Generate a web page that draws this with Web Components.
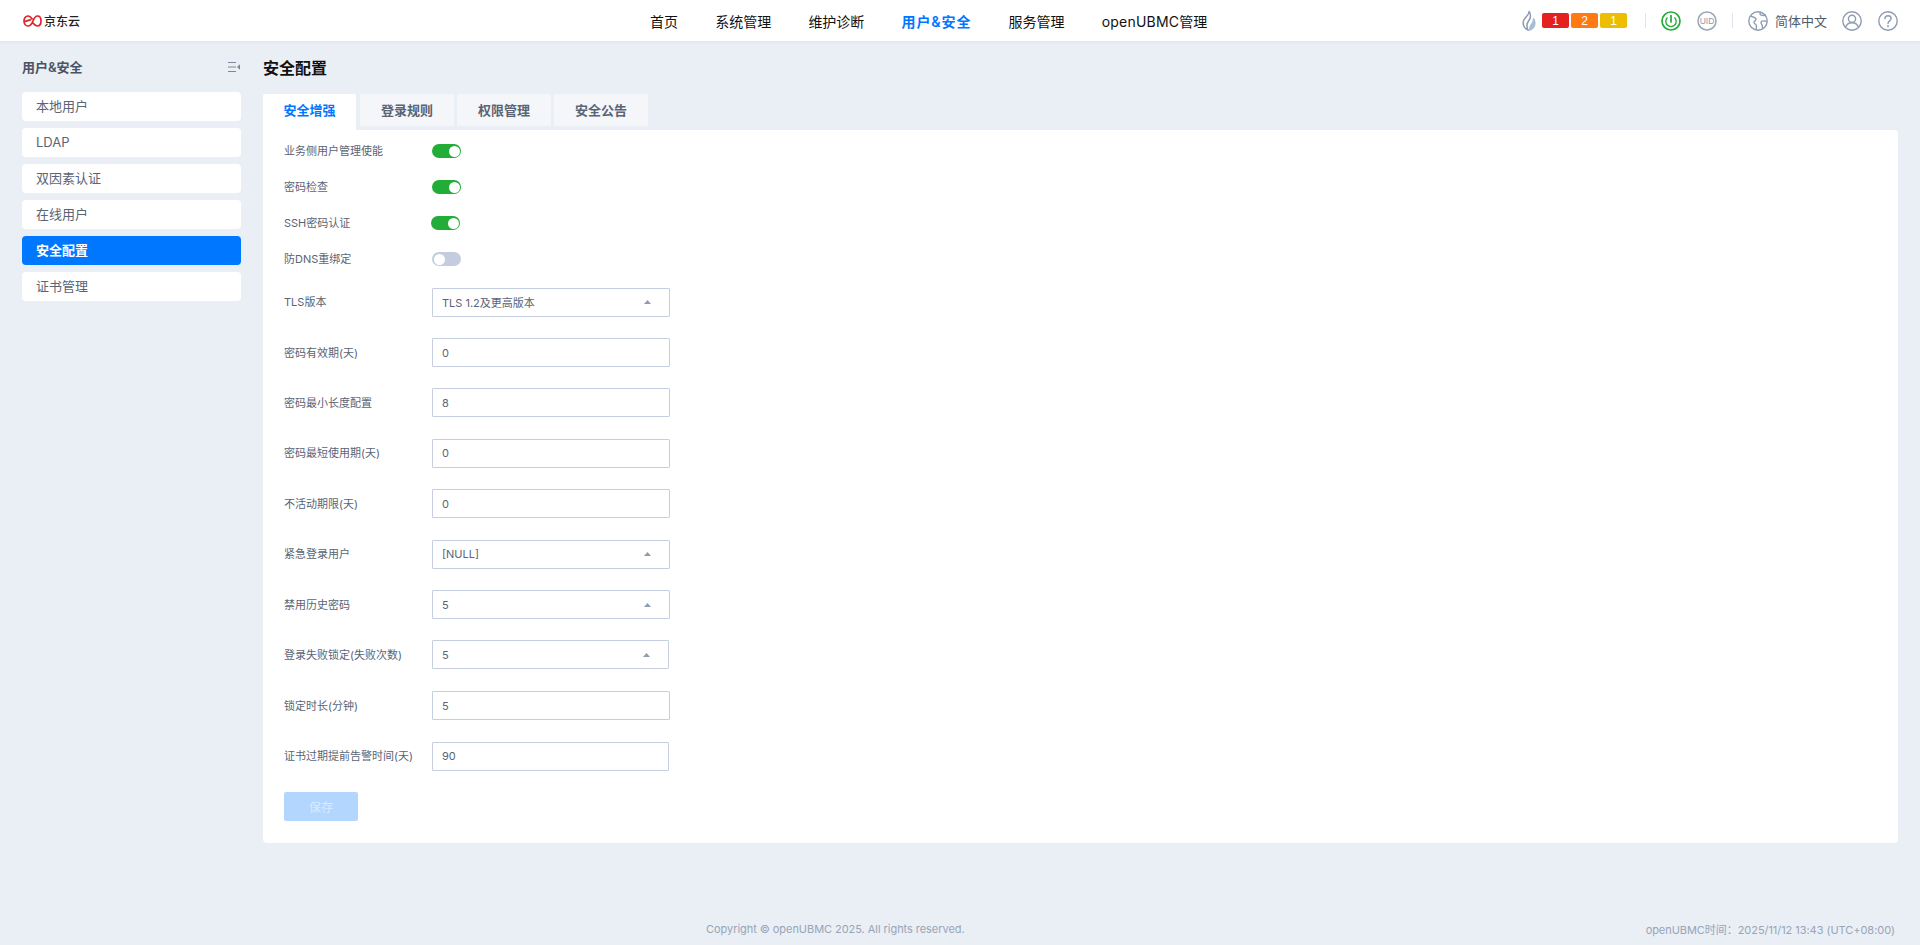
<!DOCTYPE html>
<html lang="zh">
<head>
<meta charset="utf-8">
<title>openUBMC</title>
<style>
  html, body { margin: 0; height: 100%; }
  body {
    background: #eaeff6;
    font-family: Inter, "Noto Sans CJK SC", sans-serif;
    overflow: hidden;
  }
</style>
</head>
<body>
<ubmc-app>
  <ubmc-header slot="header"></ubmc-header>
  <ubmc-sidebar slot="side" title-text="用户&amp;安全">
    <side-item>本地用户</side-item>
    <side-item>LDAP</side-item>
    <side-item>双因素认证</side-item>
    <side-item>在线用户</side-item>
    <side-item active>安全配置</side-item>
    <side-item>证书管理</side-item>
  </ubmc-sidebar>
  <security-page slot="main"></security-page>
  <ubmc-footer slot="footer"></ubmc-footer>
</ubmc-app>

<script>
// App shell
class UbmcApp extends HTMLElement {
  constructor() {
    super();
    const shadow = this.attachShadow({ mode: 'open' });
    shadow.innerHTML = `
      <style>
        :host { display: flex; flex-direction: column; height: 945px; }
        .body { display: flex; flex: 1; min-height: 0; padding: 0 22px 0 22px; }
        ::slotted([slot=side]) { width: 219px; flex: none; }
        ::slotted([slot=main]) { flex: 1; min-width: 0; margin-left: 22px; }
      </style>
      <slot name="header"></slot>
      <div class="body">
        <slot name="side"></slot>
        <slot name="main"></slot>
      </div>
      <slot name="footer"></slot>
    `;
  }
}

// Top bar
class UbmcHeader extends HTMLElement {
  constructor() {
    super();
    const shadow = this.attachShadow({ mode: 'open' });
    const nav = ['首页', '系统管理', '维护诊断', '用户&安全', '服务管理', 'openUBMC管理'];
    shadow.innerHTML = `
      <style>
        :host {
          display: flex; align-items: center; height: 41px; background: #fff;
          box-shadow: 0 1px 3px rgba(120, 140, 170, .12);
          position: relative; padding: 0 22px 0 23px; color: #4f5a6b;
        }
        .logo { display: flex; align-items: center; width: 627px; flex: none; }
        .logo b { font: 500 12px "Noto Sans CJK SC", sans-serif; color: #222; margin-left: 2px; }
        nav { display: flex; gap: 37.2px; font-size: 14px; color: #111; }
        nav a:last-child { letter-spacing: .2px; }
        nav a.on { color: #0077ff; font-weight: 600; letter-spacing: .9px; }
        .tools { margin-left: auto; display: flex; align-items: center; }
        .badge {
          width: 27px; height: 15px; border-radius: 2px; color: #fff; font: 12px "Liberation Sans", sans-serif;
          display: flex; align-items: center; justify-content: center; margin-left: 2px;
        }
        .sep { width: 1px; height: 15px; background: #dfe5ee; }
        .lang { font-size: 13px; margin-left: 7px; }
        svg { display: block; flex: none; }
      </style>
      <div class="logo">
        <svg width="19" height="12" viewBox="0 0 19 12" fill="none" stroke="#e0232b" stroke-width="1.700">
          <path d="M9.500 4.500C8.300 2.500 6.800 1 5 1 2.600 1 1 3.200 1 6c0 2.800 1.600 5 4 5 2.800 0 4-2.500 5-5 1-2.500 2-5 4.500-5C16.700 1 18 3.200 18 6c0 2.800-1.400 5-3.800 5-1.800 0-3.200-1.500-4.400-3.200"/>
          <path d="M1.500 6.600L8 4.600"/>
        </svg>
        <b>京东云</b>
      </div>
      <nav>${nav.map((n) => `<a class="${n === '用户&安全' ? 'on' : ''}">${n.replace('&', '&amp;')}</a>`).join('')}</nav>
      <div class="tools">
        <svg width="14" height="21" viewBox="0 0 14 21" fill="none" stroke="#8d9cb2" stroke-width="1.500" style="margin-right:4px">
          <path d="M7 1C8 5 2.500 7 1.300 11.500.8 15 2.800 18.500 6 20 4.300 16.500 4.500 13.500 6.800 10.500 8.800 8 9 4.500 7 1Z"/>
          <path d="M11.500 8.500C13 11 13.200 14 12 16.500 11 18.200 9.800 19.300 8 20 7.300 17 8.500 15.500 9.800 14 11 12.600 11.700 10.800 11.500 8.500Z" fill="#a9bdd6" stroke="#a9bdd6"/>
        </svg>
        <span class="badge" style="background:#e42020">1</span>
        <span class="badge" style="background:#ff7a10">2</span>
        <span class="badge" style="background:#edbe00">1</span>
        <span class="sep" style="margin-left:18px"></span>
        <svg width="20" height="20" viewBox="0 0 20 20" fill="none" stroke="#22ac38" stroke-width="1.700" style="margin-left:15px">
          <circle cx="10" cy="10" r="9"/>
          <path d="M10 4.500v6.500" stroke-linecap="round"/>
          <path d="M6.500 6.500a5.200 5.200 0 1 0 7 0" stroke-width="1.300"/>
        </svg>
        <svg width="20" height="20" viewBox="0 0 20 20" fill="none" style="margin-left:16px">
          <circle cx="10" cy="10" r="9" stroke="#97a5ba" stroke-width="1.500"/>
          <text x="10" y="13" text-anchor="middle" font-size="8.500" fill="#8a98ae" font-family="Liberation Sans">UID</text>
        </svg>
        <span class="sep" style="margin-left:15px"></span>
        <svg width="20" height="20" viewBox="0 0 20 20" fill="none" stroke="#8d9cb2" stroke-width="1.400" style="margin-left:15px">
          <circle cx="10" cy="10" r="9.200"/>
          <path d="M2.500 5.200C5 6 7.500 6.200 8 8c.4 1.700-2.200 2-2 3.500.2 1.400 2 1.500 2.400 3 .2 1 0 3-.4 4.500"/>
          <path d="M12.500 1.200c-.8 1.300-.6 2.500.8 3 1.500.5 3.200.2 4.800-.2M18.800 10.500c-1.800-.7-3.300-.9-4.800-.3-1.300.6-1.200 2.100-.4 3 .8.900 1 2.200.9 4"/>
        </svg>
        <span class="lang">简体中文</span>
        <svg width="20" height="20" viewBox="0 0 20 20" fill="none" stroke="#8d9cb2" stroke-width="1.400" style="margin-left:15px">
          <circle cx="10" cy="10" r="9.200"/>
          <circle cx="10" cy="7.800" r="3.600"/>
          <path d="M3.500 16.500c1-3.200 3.500-4.700 6.500-4.700s5.500 1.500 6.500 4.700"/>
        </svg>
        <svg width="20" height="20" viewBox="0 0 20 20" fill="none" stroke="#8d9cb2" stroke-width="1.400" style="margin-left:16px">
          <circle cx="10" cy="10" r="9.200"/>
          <path d="M6.900 7.600C7 5.800 8.300 4.700 10 4.700c1.800 0 3.100 1.100 3.100 2.700 0 2.400-3.100 2.500-3.100 5" stroke-linecap="round"/>
          <path d="M10 14.500v1.200" stroke-linecap="round"/>
        </svg>
      </div>
    `;
  }
}

// Left menu
class UbmcSidebar extends HTMLElement {
  constructor() {
    super();
    const shadow = this.attachShadow({ mode: 'open' });
    shadow.innerHTML = `
      <style>
        :host { display: block; }
        .head {
          display: flex; align-items: center; justify-content: space-between;
          height: 51px; padding-right: 1px;
          font-size: 13px; font-weight: 600; color: #4a5364;
        }
        .list { display: flex; flex-direction: column; gap: 7px; }
      </style>
      <div class="head">
        <span>${this.getAttribute('title-text').replace('&', '&amp;')}</span>
        <svg width="12" height="10" viewBox="0 0 12 10" fill="#7c8798">
          <rect x="0" y="0" width="8" height="1"/><rect x="0" y="4.500" width="8" height="1"/><rect x="0" y="9" width="8" height="1"/>
          <path d="M12 2.200v5.600L9 5z"/>
        </svg>
      </div>
      <div class="list"><slot></slot></div>
    `;
  }
}

class SideItem extends HTMLElement {
  constructor() {
    super();
    const shadow = this.attachShadow({ mode: 'open' });
    shadow.innerHTML = `
      <style>
        :host {
          display: flex; align-items: center; height: 29px; padding: 0 0 2px 14px; box-sizing: border-box;
          background: #fff; border-radius: 4px; font-size: 13px; color: #5a6474;
        }
        :host([active]) { background: #0077ff; color: #fff; font-weight: 600; }
      </style>
      <slot></slot>
    `;
  }
}

// Form bits
class ToggleSwitch extends HTMLElement {
  constructor() {
    super();
    const shadow = this.attachShadow({ mode: 'open' });
    shadow.innerHTML = `
      <style>
        :host {
          display: flex; align-items: center; width: 29px; height: 14px; box-sizing: border-box;
          padding: 0 1.5px; border-radius: 7px; background: #c3cddd;
        }
        :host([on]) { background: #22ac38; justify-content: flex-end; }
        i { width: 11px; height: 11px; border-radius: 50%; background: #fff; }
      </style>
      <i></i>
    `;
  }
}

class FormRow extends HTMLElement {
  constructor() {
    super();
    const shadow = this.attachShadow({ mode: 'open' });
    shadow.innerHTML = `
      <style>
        :host { display: flex; align-items: center; height: 50.4px; font-size: 11px; color: #5a6474; }
        :host([compact]) { height: 36px; }
        .label { width: 148px; flex: none; position: relative; top: -1px; }
      </style>
      <span class="label">${this.getAttribute('label')}</span>
      <slot></slot>
    `;
  }
}

class ValueBox extends HTMLElement {
  constructor() {
    super();
    const shadow = this.attachShadow({ mode: 'open' });
    const arrow = this.hasAttribute('select')
      ? '<svg width="7" height="4" viewBox="0 0 7 4" fill="#8f9bae"><path d="M3.500 0L7 4H0z"/></svg>'
      : '';
    shadow.innerHTML = `
      <style>
        :host {
          display: flex; align-items: center; justify-content: space-between; box-sizing: border-box;
          width: 238px; height: 29px; padding: 0 18px 0 9px;
          border: 1px solid #c5cfe1; border-radius: 1px; background: #fff; font-size: 11px; color: #5a6474;
        }
        :host([narrow]) { width: 237px; }
        svg { display: block; }
      </style>
      <span><slot></slot></span>${arrow}
    `;
  }
}

// Security config page
class SecurityPage extends HTMLElement {
  constructor() {
    super();
    const shadow = this.attachShadow({ mode: 'open' });
    const tabs = ['安全增强', '登录规则', '权限管理', '安全公告'];
    const toggles = [['业务侧用户管理使能', true], ['密码检查', true], ['SSH密码认证', true, 'shift'], ['防DNS重绑定', false]];
    const fields = [
      ['TLS版本', 'TLS 1.2及更高版本', 'select'],
      ['密码有效期(天)', '0'],
      ['密码最小长度配置', '8'],
      ['密码最短使用期(天)', '0'],
      ['不活动期限(天)', '0'],
      ['紧急登录用户', '[NULL]', 'select'],
      ['禁用历史密码', '5', 'select'],
      ['登录失败锁定(失败次数)', '5', 'select narrow'],
      ['锁定时长(分钟)', '5'],
      ['证书过期提前告警时间(天)', '90', 'narrow'],
    ];
    shadow.innerHTML = `
      <style>
        :host { display: block; }
        h1 { margin: 0; height: 53px; display: flex; align-items: center; font-size: 16px; font-weight: 700; color: #111; padding-bottom: 1px; box-sizing: border-box; }
        .tabs { display: flex; align-items: flex-start; gap: 3px; height: 36px; }
        .tab {
          width: 94px; height: 32px; display: flex; align-items: center; justify-content: center;
          background: #f4f6fa; font-size: 13px; font-weight: 600; color: #5a6474; border-radius: 2px 2px 0 0; padding-bottom: 2px; box-sizing: border-box;
        }
        .tab.on { width: 93px; height: 36px; background: #fff; color: #0077ff; padding-bottom: 6px; margin-right: 1px; }
        .card { background: #fff; border-radius: 0 4px 4px 4px; padding: 3px 22px 22px 21px; height: 713px; box-sizing: border-box; }
        form-row:nth-of-type(13) { margin-top: .6px; }
        .save {
          width: 74px; height: 29px; margin-top: 10.4px; border-radius: 2px; background: #b3d6ff; color: #d9ebff;
          font-size: 12px; display: flex; align-items: center; justify-content: center;
        }
      </style>
      <h1>安全配置</h1>
      <div class="tabs">${tabs.map((t, i) => `<div class="tab ${i === 0 ? 'on' : ''}">${t}</div>`).join('')}</div>
      <div class="card">
        ${toggles.map(([l, on, cls]) => `<form-row compact label="${l}"><toggle-switch ${on ? 'on' : ''} class="${cls || ''}"></toggle-switch></form-row>`).join('')}
        ${fields.map(([l, v, attrs]) => `<form-row label="${l}"><value-box ${attrs || ''}>${v}</value-box></form-row>`).join('')}
        <div class="save">保存</div>
      </div>
    `;
    shadow.querySelectorAll('toggle-switch.shift').forEach((el) => { el.style.marginLeft = '-1px'; });
  }
}

class UbmcFooter extends HTMLElement {
  constructor() {
    super();
    const shadow = this.attachShadow({ mode: 'open' });
    shadow.innerHTML = `
      <style>
        :host {
          display: flex; justify-content: space-between; align-items: center;
          height: 32px; padding: 0 25px 0 706px; font-size: 11px; color: #98a4b7; letter-spacing: -.05px;
        }
      </style>
      <span>Copyright © openUBMC 2025. All rights reserved.</span>
      <span>openUBMC时间：2025/11/12 13:43 (UTC+08:00)</span>
    `;
  }
}

customElements.define('ubmc-app', UbmcApp);
customElements.define('ubmc-header', UbmcHeader);
customElements.define('ubmc-sidebar', UbmcSidebar);
customElements.define('side-item', SideItem);
customElements.define('toggle-switch', ToggleSwitch);
customElements.define('form-row', FormRow);
customElements.define('value-box', ValueBox);
customElements.define('security-page', SecurityPage);
customElements.define('ubmc-footer', UbmcFooter);
</script>
</body>
</html>
